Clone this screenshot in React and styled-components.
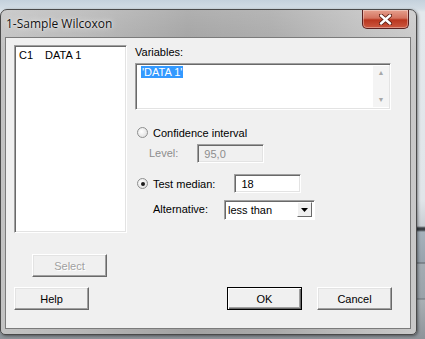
import React from 'react';
import styled, { createGlobalStyle } from 'styled-components';

const GlobalStyle = createGlobalStyle`
    html, body {
        margin: 0;
        padding: 0;
    }
    body {
        font-family: "Liberation Sans", Arial, sans-serif;
        font-size: 11px;
        color: #000;
    }
`;

// desktop behind the dialog (blurred spreadsheet)
const Desktop = styled.div`
    width: 425px;
    height: 339px;
    overflow: hidden;
    display: flex;
    align-items: flex-start;
    background:
        linear-gradient(180deg,
            #c4d1dc 0px, #d3dde5 9px, #e3e8ec 12px, #e1e5e9 200px,
            #c9ced3 226px, #3b4045 228px, #3b4045 230px, #a6b2bc 232px,
            #98a3ad 262px, #5d6369 263px, #a4acb3 264px, #9aa2a9 298px,
            #6a7076 299px, #a9afb4 300px, #8d9399 339px);
`;

const Window = styled.div`
    margin-top: 9px;
    width: 417px;
    height: 326px;
    box-sizing: border-box;
    display: flex;
    flex-direction: column;
    border: 1px solid #4a4a4a;
    border-radius: 7px 7px 5px 5px;
    box-shadow: 1px 1px 3px rgba(0, 0, 0, 0.45);
    background:
        linear-gradient(180deg, rgba(255,255,255,0.15) 0, rgba(255,255,255,0) 40px),
        linear-gradient(90deg, #c3c3c3 0%, #b6b6b6 20%, #a2a2a2 45%, #a9a9a9 65%, #bdbdbd 85%, #c9c9c9 100%);
`;

const TitleBar = styled.div`
    height: 27px;
    display: flex;
    justify-content: space-between;
    align-items: flex-start;
    padding: 0 7px 0 5px;
`;

const Title = styled.div`
    font-family: "Open Sans", "Liberation Sans", sans-serif;
    font-size: 12px;
    line-height: 26px;
    padding-top: 1px;
    color: #111;
    text-shadow: 0 0 6px rgba(255, 255, 255, 0.9), 0 0 2px rgba(255, 255, 255, 0.8);
`;

const CloseButton = styled.div`
    width: 47px;
    height: 19px;
    box-sizing: border-box;
    border: 1px solid #5a2020;
    border-top: none;
    border-radius: 0 0 5px 5px;
    background: linear-gradient(180deg, #e6a08e 0%, #d4735f 45%, #b9361f 55%, #cc5840 100%);
    box-shadow: inset 0 0 0 1px rgba(255, 255, 255, 0.35);
    display: flex;
    align-items: center;
    justify-content: center;
`;

const Client = styled.div`
    flex: 1;
    margin: 0 5px 5px 4px;
    background: #f0f0f0;
    border: 1px solid #7b7b7b;
    display: flex;
    flex-direction: column;
    padding: 7px 0 0 8px;
`;

const Body = styled.div`
    display: flex;
    gap: 8px;
`;

const LeftColumn = styled.div`
    width: 113px;
    display: flex;
    flex-direction: column;
    align-items: flex-start;
`;

const ListBox = styled.div`
    width: 113px;
    height: 188px;
    box-sizing: border-box;
    background: #fff;
    border: 1px solid;
    border-color: #a0a0a0 #ffffff #ffffff #a0a0a0;
    box-shadow: inset 1px 1px 0 #696969, inset -1px -1px 0 #e3e3e3;
    padding: 3px 4px;
`;

const ListItem = styled.div`
    display: flex;
    gap: 12px;
    line-height: 13px;
`;

const Button = styled.div`
    width: 75px;
    height: 23px;
    box-sizing: border-box;
    display: flex;
    align-items: center;
    justify-content: center;
    background: #f0f0f0;
    border: 1px solid;
    border-color: ${p => (p.$default ? '#000' : '#ffffff #696969 #696969 #ffffff')};
    box-shadow: ${p => (p.$default
        ? 'inset 1px 1px 0 #fff, inset -1px -1px 0 #696969, inset -2px -2px 0 #a0a0a0'
        : 'inset -1px -1px 0 #a0a0a0, inset 1px 1px 0 #e3e3e3')};
    color: ${p => (p.$disabled ? '#a0a0a0' : '#000')};
    text-shadow: ${p => (p.$disabled ? '1px 1px 0 #fff' : 'none')};
`;

const SelectButtonWrap = styled.div`
    margin: 21px 0 0 18px;
`;

const Form = styled.div`
    display: flex;
    flex-direction: column;
`;

const Label = styled.div`
    line-height: 13px;
    color: ${p => (p.$disabled ? '#8d8d8d' : '#000')};
`;

const VarsBox = styled.div`
    margin-top: 4px;
    width: 256px;
    height: 47px;
    box-sizing: border-box;
    background: #fff;
    border: 1px solid;
    border-color: #a0a0a0 #ffffff #ffffff #a0a0a0;
    box-shadow: inset 1px 1px 0 #696969, inset -1px -1px 0 #e3e3e3;
    display: flex;
    justify-content: space-between;
    padding: 2px 1px 2px 5px;
`;

const Selected = styled.span`
    align-self: flex-start;
    background: #3399ff;
    color: #fff;
    line-height: 12px;
    padding: 0 1px;
`;

const ScrollBar = styled.div`
    width: 16px;
    display: flex;
    flex-direction: column;
    justify-content: space-between;
    align-items: center;
    background: #f4f4f4;
    color: #a8a8a8;
    font-size: 7px;
    line-height: 14px;
`;

const RadioRow = styled.div`
    display: flex;
    align-items: center;
    gap: 5px;
    margin: ${p => p.$m || '0'};
    height: 19px;
`;

const Radio = styled.span`
    width: 11px;
    height: 11px;
    border-radius: 50%;
    box-sizing: border-box;
    border: 1px solid #8e8f8f;
    background: radial-gradient(circle at 40% 40%, #ffffff 0, #e4e4e4 70%);
    display: flex;
    align-items: center;
    justify-content: center;
    margin-left: 1px;

    &::after {
        content: '';
        width: 4px;
        height: 4px;
        border-radius: 50%;
        background: ${p => (p.$checked ? '#1b1b1b' : 'transparent')};
    }
`;

const FieldRow = styled.div`
    display: flex;
    align-items: center;
    height: 19px;
    margin: ${p => p.$m || '0'};
    padding-left: ${p => p.$indent || 0}px;
`;

const TextInput = styled.div`
    width: ${p => p.$w}px;
    height: 19px;
    box-sizing: border-box;
    margin-left: ${p => p.$left}px;
    background: ${p => (p.$disabled ? '#f0f0f0' : '#fff')};
    color: ${p => (p.$disabled ? '#8d8d8d' : '#000')};
    border: 1px solid;
    border-color: #a0a0a0 #ffffff #ffffff #a0a0a0;
    box-shadow: inset 1px 1px 0 #696969, inset -1px -1px 0 #e3e3e3;
    display: flex;
    align-items: center;
    padding-left: 6px;
`;

const DropDown = styled.div`
    width: 91px;
    height: 20px;
    box-sizing: border-box;
    margin-left: 16px;
    background: #fff;
    border: 1px solid;
    border-color: #a0a0a0 #ffffff #ffffff #a0a0a0;
    box-shadow: inset 1px 1px 0 #696969;
    display: flex;
    align-items: center;
    justify-content: space-between;
    padding: 2px 2px 2px 3px;
`;

const DropArrow = styled.div`
    width: 15px;
    height: 15px;
    box-sizing: border-box;
    background: #f0f0f0;
    border: 1px solid;
    border-color: #ffffff #696969 #696969 #ffffff;
    display: flex;
    align-items: center;
    justify-content: center;
`;

const Footer = styled.div`
    display: flex;
    margin-top: 10px;

    & > :nth-child(2) {
        margin-left: 138px;
    }
    & > :nth-child(3) {
        margin-left: 15px;
    }
`;

export default function App() {
    return (
        <>
            <GlobalStyle />
            <Desktop>
                <Window>
                    <TitleBar>
                        <Title>1-Sample Wilcoxon</Title>
                        <CloseButton>
                            <svg width="13" height="11" viewBox="0 0 13 11">
                                <path d="M2 1.5l9 8M11 1.5l-9 8" stroke="#5b1d12" strokeWidth="4.2" strokeLinecap="round" />
                                <path d="M2 1.5l9 8M11 1.5l-9 8" stroke="#fff" strokeWidth="2.4" strokeLinecap="round" />
                            </svg>
                        </CloseButton>
                    </TitleBar>
                    <Client>
                        <Body>
                            <LeftColumn>
                                <ListBox>
                                    <ListItem><span>C1</span><span>DATA 1</span></ListItem>
                                </ListBox>
                                <SelectButtonWrap>
                                    <Button $disabled>Select</Button>
                                </SelectButtonWrap>
                            </LeftColumn>
                            <Form>
                                <Label style={{ marginTop: 1 }}>Variables:</Label>
                                <VarsBox>
                                    <Selected>'DATA 1'</Selected>
                                    <ScrollBar>
                                        <span>▲</span>
                                        <span>▼</span>
                                    </ScrollBar>
                                </VarsBox>
                                <RadioRow $m="13px 0 0 1px">
                                    <Radio />
                                    <span>Confidence interval</span>
                                </RadioRow>
                                <FieldRow $m="2px 0 0 0" $indent={14}>
                                    <Label $disabled>Level:</Label>
                                    <TextInput $w={67} $left={19} $disabled>95,0</TextInput>
                                </FieldRow>
                                <RadioRow $m="11px 0 0 1px">
                                    <Radio $checked />
                                    <span>Test median:</span>
                                    <TextInput $w={67} $left={14}>18</TextInput>
                                </RadioRow>
                                <FieldRow $m="7px 0 0 0" $indent={18}>
                                    <Label>Alternative:</Label>
                                    <DropDown>
                                        <span>less than</span>
                                        <DropArrow>
                                            <svg width="7" height="4" viewBox="0 0 7 4">
                                                <path d="M0 0h7L3.5 4z" fill="#000" />
                                            </svg>
                                        </DropArrow>
                                    </DropDown>
                                </FieldRow>
                            </Form>
                        </Body>
                        <Footer>
                            <Button>Help</Button>
                            <Button $default>OK</Button>
                            <Button>Cancel</Button>
                        </Footer>
                    </Client>
                </Window>
            </Desktop>
        </>
    );
}
